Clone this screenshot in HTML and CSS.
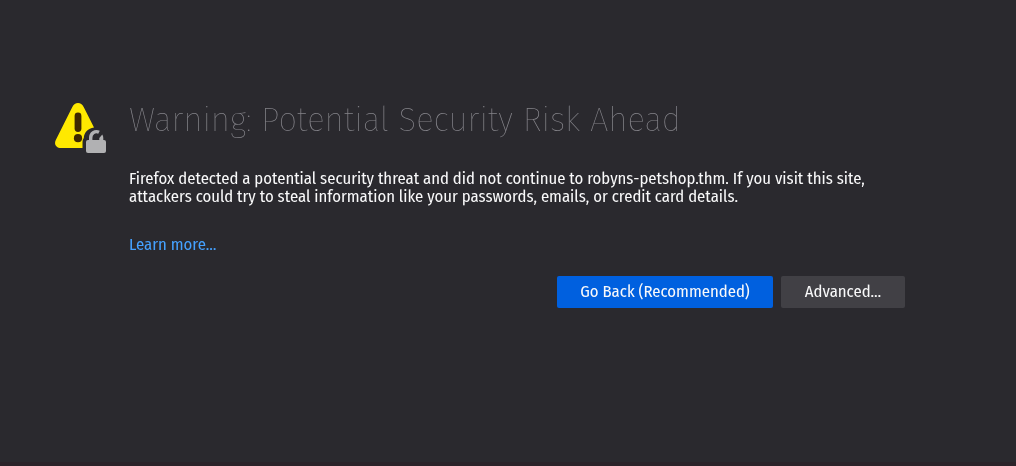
FILE: index.html
```html
<!DOCTYPE html>
<html lang="en">
<head>
<meta charset="utf-8">
<title>Warning: Potential Security Risk Ahead</title>
<link rel="stylesheet" href="styles.css">
</head>
<body>
<main class="warning">
  <svg class="warning-icon" viewBox="0 0 52 52" aria-hidden="true">
    <path fill="#ffe900" d="M17.2 4.2C18.7 1.1 20.6 0 23 0s4.300 1.100 5.800 4.200L39 24.500C33 25.500 29 29.500 28.800 35Q27.500 36.500 27.500 39V45H6C1.200 45-1.300 41.300.800 37Z"/>
    <path fill="none" stroke="#3e2800" stroke-width="6.800" stroke-linecap="round" d="M23 13v12.500"/>
    <circle cx="23" cy="35.200" r="4.100" fill="#3e2800"/>
    <rect x="31" y="37" width="20" height="13" rx="2" fill="#b1b1b3"/>
    <path fill="none" stroke="#b1b1b3" stroke-width="3.400" d="M35.700 38v-3a5.800 6 0 0 1 8.300-5.700"/>
    <path fill="#b1b1b3" d="M44.300 37v-2l3-3.500q1 1.500 1 3.500v3z"/>
  </svg>
  <div class="content">
    <h1 class="title">Warning: Potential Security Risk Ahead</h1>
    <p class="description">Firefox detected a potential security threat and did not continue to robyns-petshop.thm. If you visit this site,<br>attackers could try to steal information like your passwords, emails, or credit card details.</p>
    <a class="learn-more">Learn more…</a>
    <div class="actions">
      <button class="button primary">Go Back (Recommended)</button>
      <button class="button secondary">Advanced…</button>
    </div>
  </div>
</main>
</body>
</html>
```
FILE: styles.css
```css
* { box-sizing: border-box; }
body {
  margin: 0;
  height: 466px;
  overflow: hidden;
  background: #2a292e;
  border-bottom: 4px solid #2b2329;
  color: #f9f9fa;
  font-family: "Fira Sans Condensed", "Noto Sans", sans-serif;
  font-size: 16.67px;
}
.warning { display: flex; width: 905px; padding: 103px 0 0 55px; will-change: transform; }
.warning-icon { flex: none; width: 52px; height: 52px; margin-right: 22px; }
.content { flex: 1; display: flex; flex-direction: column; }
.title {
  margin: -3px 0 0;
  height: 40px;
  font-family: "Fira Sans", "Fira Sans Condensed", sans-serif;
  font-size: 33px;
  font-weight: 100;
  letter-spacing: -0.055px;
  line-height: 40px;
  white-space: nowrap;
  color: #85848a;
}
.description { margin: 29px 0 0; line-height: 18px; white-space: nowrap; }
.learn-more { margin-top: 30px; line-height: 18px; color: #45a1ff; align-self: flex-start; }
.actions { display: flex; justify-content: flex-end; gap: 8px; margin-top: 23px; }
.button {
  height: 32px;
  padding: 0 0 2px;
  border: 0;
  border-radius: 2px;
  font: inherit;
  color: #f9f9fa;
}
.primary { width: 216px; background: #0060df; }
.secondary { width: 124px; background: #414045; }
```
